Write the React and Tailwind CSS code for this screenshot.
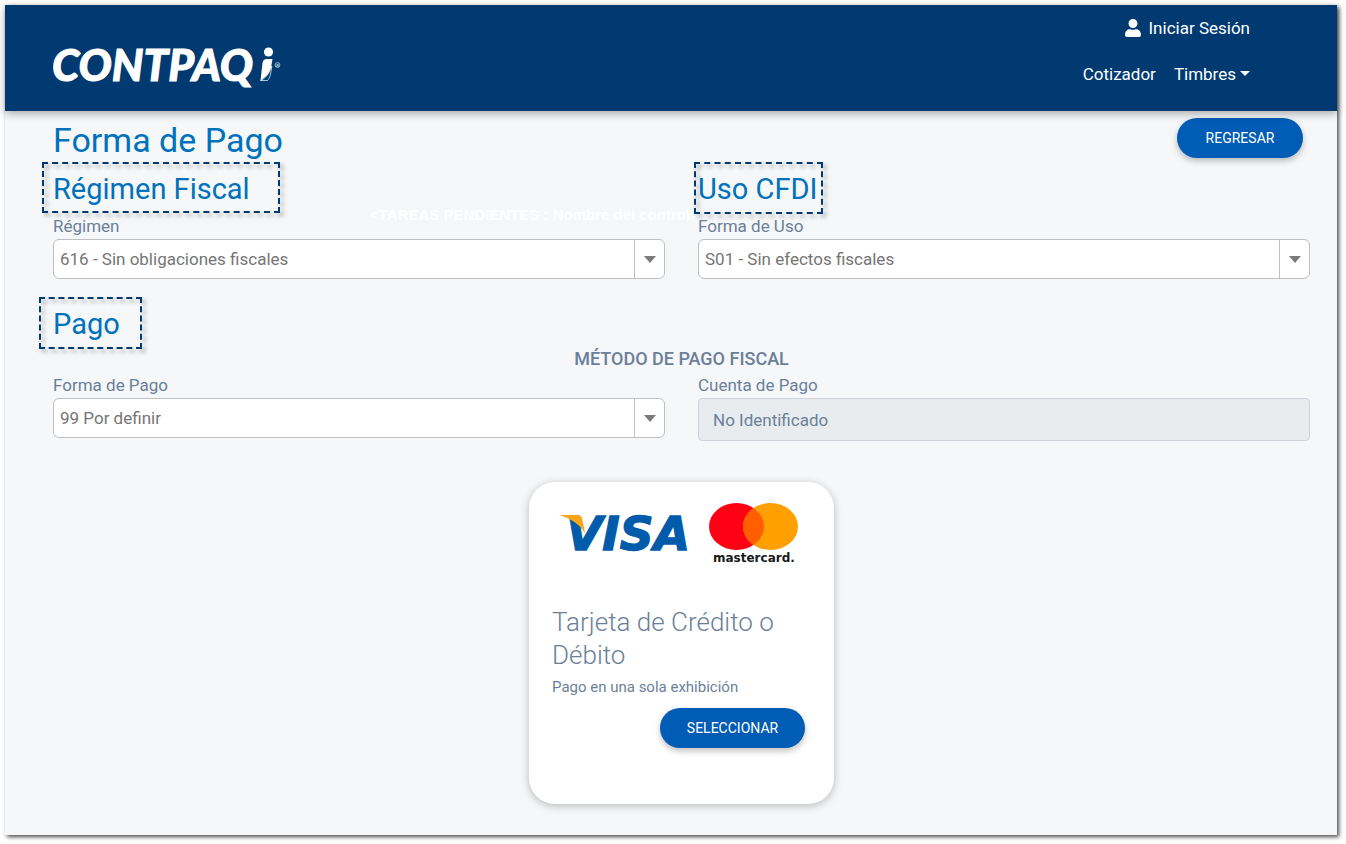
import { FaUser } from "react-icons/fa";

function Logo() {
  return (
    <svg viewBox="0 0 230 60" className="h-[60px] w-[230px]" role="img" aria-label="CONTPAQi">
      <text x="-1" y="43" fill="#fff" stroke="#fff" strokeWidth="1" fontSize="44" fontWeight="900" fontStyle="italic" fontFamily="Lato, sans-serif">
        CONTPAQ
      </text>
      <circle cx="215.500" cy="14" r="4.600" fill="#fff" />
      <path d="M213 21H219.500L218 30C217 35 214 38 207.500 42.500L209.500 25Q210 21.500 213 21Z" fill="#fff" />
      <path d="M218.800 28C218 35 217 40 214.500 42.500H207.500C212 41 216 36 218.800 28Z" fill="#003a70" stroke="#fff" strokeWidth="0.7" />
      <circle cx="224.500" cy="27" r="2.400" fill="none" stroke="#fff" strokeWidth="0.6" />
      <text x="223.200" y="28.600" fill="#fff" fontSize="4" fontFamily="Roboto, sans-serif">R</text>
    </svg>
  );
}

function CardBrands() {
  return (
    <svg viewBox="0 0 240 68" className="ml-2 h-[68px] w-[240px]" role="img" aria-label="Visa, Mastercard">
      <defs>
        <clipPath id="left-disc">
          <ellipse cx="176.500" cy="24.500" rx="27.500" ry="23.500" />
        </clipPath>
      </defs>
      <text x="6" y="48" fill="#005caa" stroke="#005caa" strokeWidth="1.400" fontSize="47" fontWeight="700" fontStyle="italic" fontFamily="DejaVu Sans, sans-serif">
        VISA
      </text>
      <path d="M-1 13H18Q21 13 22 16L25 31Q17 18 -1 13Z" fill="#f9a51a" />
      <ellipse cx="176.500" cy="24.500" rx="27.500" ry="23.500" fill="#ff0015" />
      <ellipse cx="210.500" cy="24.500" rx="27.500" ry="23.500" fill="#ffa000" />
      <ellipse cx="210.500" cy="24.500" rx="27.500" ry="23.500" fill="#ff5f00" clipPath="url(#left-disc)" />
      <text x="153" y="60" fill="#1a1a1a" fontSize="12" fontWeight="700" fontFamily="DejaVu Sans, sans-serif">
        mastercard.
      </text>
    </svg>
  );
}

function SectionTitle({ children, outline }) {
  return (
    <h2 className="relative w-fit pt-1 text-[29px] leading-[47px] text-[#0072bc]">
      <span aria-hidden="true" className={`absolute border-2 border-dashed border-[#003a70] drop-shadow-[3px_3px_2px_rgba(0,0,0,0.35)] ${outline}`} />
      <span className="relative">{children}</span>
    </h2>
  );
}

function SelectField({ id, label, value }) {
  return (
    <div>
      <label htmlFor={id} className="block text-[17px] leading-[26px]">{label}</label>
      <div className="relative">
        <select id={id} defaultValue={value} className="block h-10 w-full appearance-none rounded-md border border-[#bfbfbf] bg-white pt-0.5 pr-9 pl-1.5 text-[17px] text-[#757575]">
          <option>{value}</option>
        </select>
        <span aria-hidden="true" className="pointer-events-none absolute inset-y-0 right-0 flex w-[31px] items-center justify-center border-l border-[#bfbfbf]">
          <svg viewBox="0 0 12 8" className="h-2 w-3"><path d="M0 1H12L6 8Z" fill="#7b7b7b" /></svg>
        </span>
      </div>
    </div>
  );
}

function PillButton({ children, className }) {
  return (
    <button type="button" className={`h-10 rounded-full bg-[#005cb5] text-sm text-white shadow-[0_3px_6px_rgba(0,0,0,0.25)] ${className}`}>
      {children}
    </button>
  );
}

export default function App() {
  return (
    <div className="flex min-h-screen bg-white pt-[5px] pr-[9px] pb-[9px] pl-[5px] font-[Roboto,sans-serif] text-[#6b7f99]">
      <div className="flex-1 bg-[#f5f7f9] shadow-[2px_2px_4px_rgba(0,0,0,0.7)]">
        <header className="relative flex justify-between bg-[#003a70] pr-[87px] pb-3 pl-12 text-white shadow-[0_3px_8px_rgba(0,0,0,0.3)]">
          <div className="pt-[33px]"><Logo /></div>
          <nav className="flex flex-col items-end gap-5 pt-[10px] pb-3 text-[17px] leading-[26px]">
            <a href="#sesion" className="flex items-center gap-1.5"><FaUser className="size-[18px]" />Iniciar Sesión</a>
            <div className="flex gap-[18px]">
              <a href="#cotizador">Cotizador</a>
              <a href="#timbres" className="flex items-center gap-1">
                Timbres
                <svg viewBox="0 0 10 6" className="h-[6px] w-[10px]"><path d="M0 0H10L5 5Z" fill="#fff" /></svg>
              </a>
            </div>
          </nav>
        </header>

        <main className="pt-[7px] pr-[27px] pb-[31px] pl-12">
          <div className="flex items-start justify-between pr-[7px]">
            <h1 className="text-[34px] leading-[44px] text-[#0072bc]">Forma de Pago</h1>
            <PillButton className="w-[126px]">REGRESAR</PillButton>
          </div>

          <div className="relative grid grid-cols-2 gap-x-[33px]">
            <p className="absolute top-[43px] left-[317px] text-[15px] leading-[20px] font-bold whitespace-nowrap text-white [font-family:'Liberation_Sans',sans-serif]">
              &lt;TAREAS PENDIENTES : Nombre del control&gt;
            </p>
            <section>
              <SectionTitle outline="top-0 -left-[11px] -right-[30px] bottom-0">Régimen Fiscal</SectionTitle>
              <SelectField id="regimen" label="Régimen" value="616 - Sin obligaciones fiscales" />
            </section>
            <section>
              <SectionTitle outline="top-0 -left-1 -right-[6px] -bottom-[1px]">Uso CFDI</SectionTitle>
              <SelectField id="uso" label="Forma de Uso" value="S01 - Sin efectos fiscales" />
            </section>
          </div>

          <section className="mt-[18px]">
            <SectionTitle outline="top-0 -left-[14px] -right-[22px] -bottom-[1px]">Pago</SectionTitle>
            <h3 className="-mt-[3px] text-center text-[18px] leading-[27px] font-medium">MÉTODO DE PAGO FISCAL</h3>
            <div className="grid grid-cols-2 gap-x-[33px]">
              <SelectField id="forma" label="Forma de Pago" value="99 Por definir" />
              <div>
                <label htmlFor="cuenta" className="block text-[17px] leading-[26px]">Cuenta de Pago</label>
                <input id="cuenta" disabled defaultValue="No Identificado" className="block h-[43px] w-full rounded border border-[#ced4da] bg-[#e8ecef] px-3.5 text-[17px] text-[#6b7f99]" />
              </div>
            </div>
          </section>

          <article className="mx-auto mt-[41px] w-[305px] rounded-[26px] bg-white pt-5 pr-[29px] pb-14 pl-[23px] shadow-[0_2px_8px_rgba(0,0,0,0.25)]">
            <CardBrands />
            <h3 className="mt-9 text-[26px] leading-[33px] font-light">Tarjeta de Crédito o Débito</h3>
            <p className="mt-1 text-[15px] leading-[22px]">Pago en una sola exhibición</p>
            <div className="mt-2.5 flex justify-end">
              <PillButton className="w-[145px]">SELECCIONAR</PillButton>
            </div>
          </article>
        </main>
      </div>
    </div>
  );
}
